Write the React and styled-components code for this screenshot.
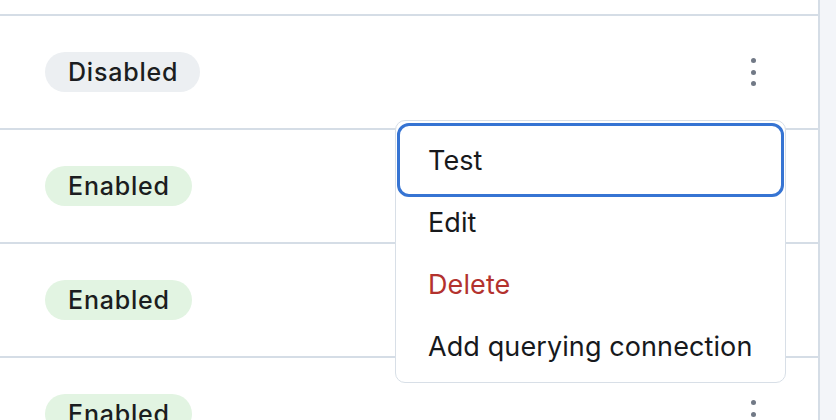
import styled, { createGlobalStyle } from "styled-components";

const GlobalStyle = createGlobalStyle`
html, body {
  margin: 0;
  padding: 0;
  background: #ffffff;
  font-family: Inter, "Noto Sans", "Liberation Sans", sans-serif;
  overflow: hidden;
}
`;

const rows = [
    { status: "disabled" },
    { status: "enabled" },
    { status: "enabled" },
    { status: "enabled" },
];

const Page = styled.div`
width: 836px;
height: 420px;
display: flex;
background: #f3f5f9;
overflow: hidden;
`;

const Table = styled.div`
position: relative;
width: 818px;
height: 100%;
background: #ffffff;
border-right: 2px solid #d5dde6;
`;

const List = styled.div`
display: flex;
flex-direction: column;
`;

// bottom edge of the row scrolled out above
const TopEdge = styled.div`
height: 14px;
border-bottom: 2px solid #d5dde6;
`;

const Row = styled.div`
height: 112px;
flex-shrink: 0;
display: flex;
align-items: center;
justify-content: space-between;
padding: 0 62px 0 45px;
border-bottom: 2px solid #d5dde6;
`;

const Badge = styled.span`
display: inline-flex;
align-items: center;
height: 40px;
padding: 0 22px 0 23px;
border-radius: 20px;
font-size: 25px;
font-weight: 500;
letter-spacing: 0.8px;
color: #1b1d20;
background: ${(p) => (p.$status === "enabled" ? "#e2f4e2" : "#eceff2")};
`;

const Kebab = styled.button`
display: flex;
flex-direction: column;
align-items: center;
gap: 6.5px;
padding: 0;
border: none;
background: none;
`;

const Dot = styled.span`
width: 5px;
height: 5px;
border-radius: 50%;
background: #717986;
`;

const Menu = styled.ul`
position: absolute;
left: 395px;
top: 120px;
width: 391px;
box-sizing: border-box;
margin: 0;
padding: 2px 1px 5px;
list-style: none;
background: #ffffff;
border: 1.5px solid #d8dfe7;
border-radius: 10px;
`;

const Item = styled.li`
height: ${(p) => (p.$focused ? "74px" : "62px")};
margin-bottom: ${(p) => (p.$focused ? "-6px" : "0")};
box-sizing: border-box;
display: flex;
align-items: center;
padding-left: ${(p) => (p.$focused ? "28px" : "31px")};
font-size: 27px;
letter-spacing: 0.1px;
color: ${(p) => (p.$danger ? "#b3322e" : "#17191c")};
border: ${(p) => (p.$focused ? "3px solid #3674d3" : "none")};
border-radius: 12px;
`;

const items = [
    { label: "Test", focused: true },
    { label: "Edit" },
    { label: "Delete", danger: true },
    { label: "Add querying connection" },
];

const App = () => {
    return (
        <Page>
            <GlobalStyle />
            <Table>
                <List>
                    <TopEdge />
                    {rows.map((row, i) => (
                        <Row key={i}>
                            <Badge $status={row.status}>
                                {row.status === "enabled" ? "Enabled" : "Disabled"}
                            </Badge>
                            <Kebab aria-label="More actions">
                                <Dot />
                                <Dot />
                                <Dot />
                            </Kebab>
                        </Row>
                    ))}
                </List>
                <Menu role="menu">
                    {items.map((item) => (
                        <Item
                            key={item.label}
                            role="menuitem"
                            $focused={item.focused}
                            $danger={item.danger}
                        >
                            {item.label}
                        </Item>
                    ))}
                </Menu>
            </Table>
        </Page>
    );
};

export default App;
